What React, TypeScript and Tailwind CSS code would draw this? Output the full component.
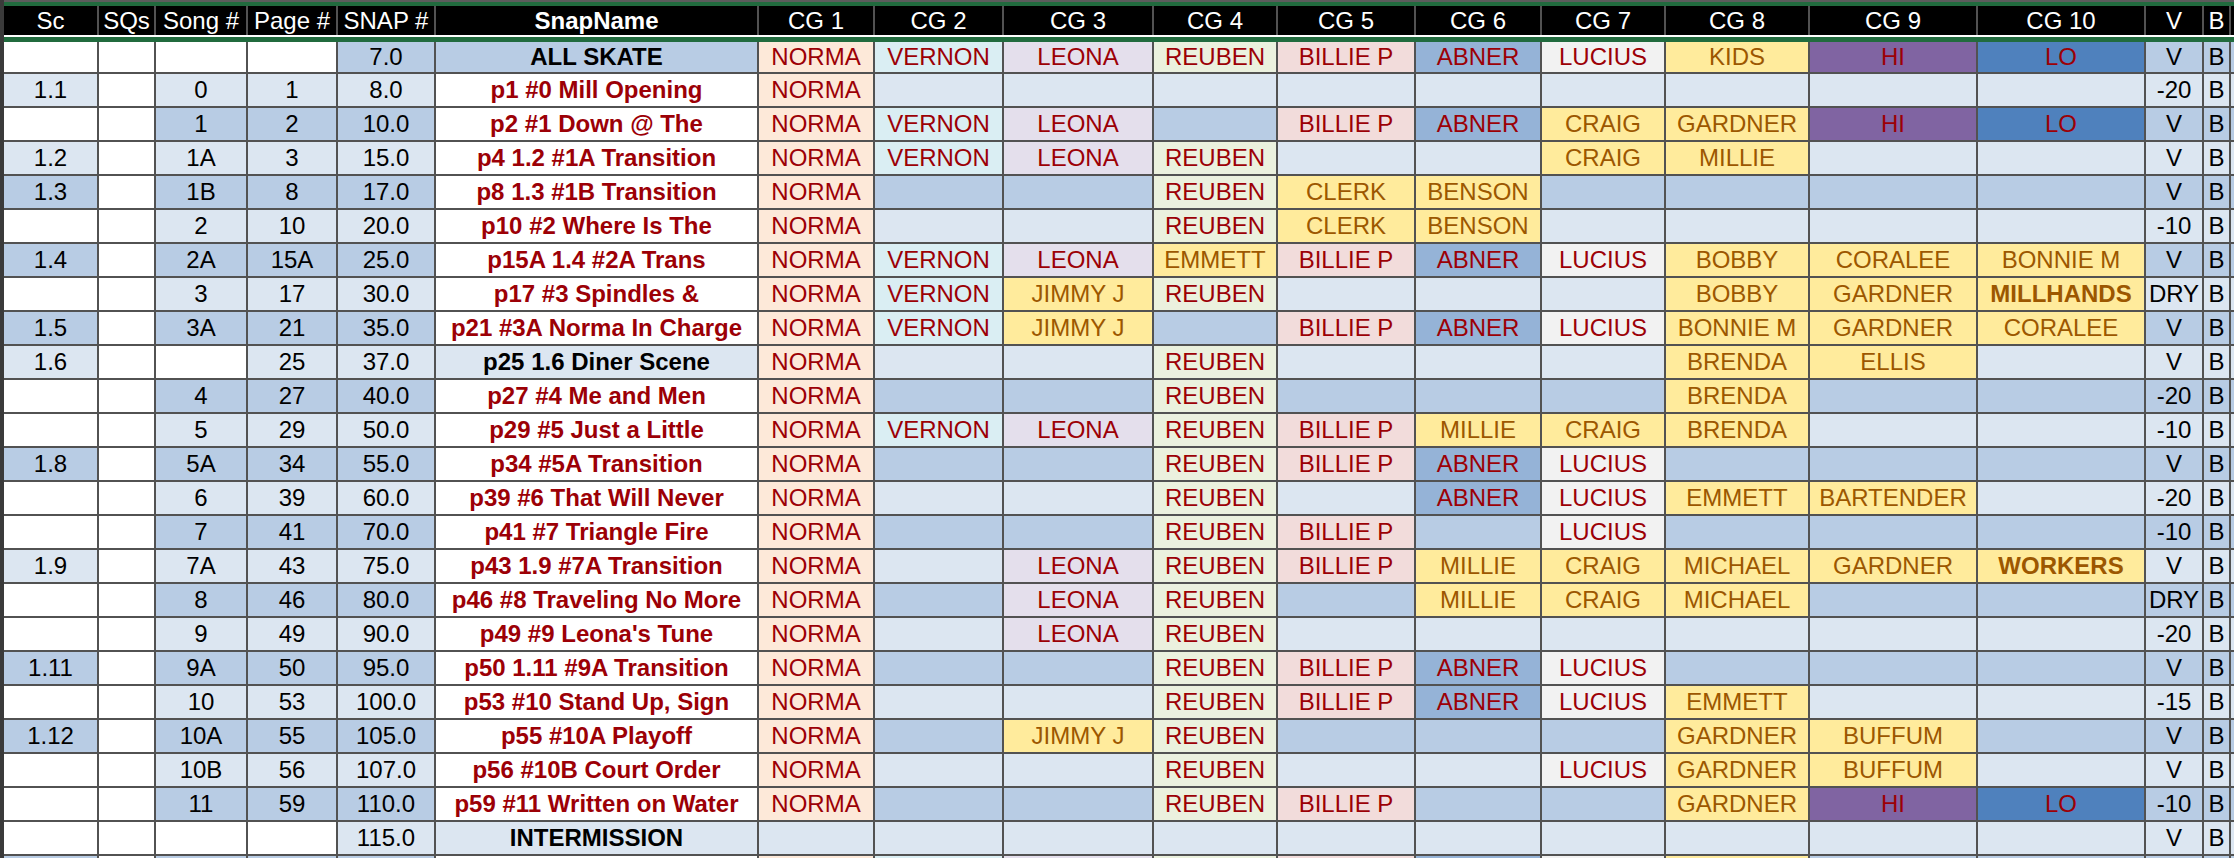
import React from 'react'

type Row = {
  sc: string
  song: string
  page: string
  snap: string
  name: string
  title?: boolean
  cg: string[]
  v: string
  hidden?: boolean
}

const COLS =
  'grid grid-cols-[93px_55px_90px_88px_96px_321px_114px_127px_148px_122px_136px_124px_122px_142px_166px_166px_56px_25px_1fr] gap-x-[2px]'

const HEADERS = [
  'Sc', 'SQs', 'Song #', 'Page #', 'SNAP #', 'SnapName',
  'CG 1', 'CG 2', 'CG 3', 'CG 4', 'CG 5', 'CG 6', 'CG 7', 'CG 8', 'CG 9', 'CG 10',
  'V', 'B', '',
]

// fill per character; anyone not listed gets the yellow "neutral" style
const CHAR_BG: Record<string, string> = {
  NORMA: 'bg-[#fde9d9] text-[#9c0006]',
  VERNON: 'bg-[#daeef3] text-[#9c0006]',
  LEONA: 'bg-[#e4dfec] text-[#9c0006]',
  REUBEN: 'bg-[#ebf1de] text-[#9c0006]',
  'BILLIE P': 'bg-[#f2dcdb] text-[#9c0006]',
  ABNER: 'bg-[#95b3d7] text-[#9c0006]',
  LUCIUS: 'bg-[#f2f2f2] text-[#9c0006]',
  HI: 'bg-[#8064a2] text-[#9c0006]',
  LO: 'bg-[#4f81bd] text-[#9c0006]',
}

const _ = ''

const rows: Row[] = [
  { sc: _, song: _, page: _, snap: '7.0', name: 'ALL SKATE', title: true, cg: ['NORMA', 'VERNON', 'LEONA', 'REUBEN', 'BILLIE P', 'ABNER', 'LUCIUS', 'KIDS', 'HI', 'LO'], v: 'V' },
  { sc: '1.1', song: '0', page: '1', snap: '8.0', name: 'p1 #0 Mill Opening', cg: ['NORMA', _, _, _, _, _, _, _, _, _], v: '-20' },
  { sc: _, song: '1', page: '2', snap: '10.0', name: 'p2 #1 Down @ The', cg: ['NORMA', 'VERNON', 'LEONA', _, 'BILLIE P', 'ABNER', 'CRAIG', 'GARDNER', 'HI', 'LO'], v: 'V' },
  { sc: '1.2', song: '1A', page: '3', snap: '15.0', name: 'p4 1.2 #1A Transition', cg: ['NORMA', 'VERNON', 'LEONA', 'REUBEN', _, _, 'CRAIG', 'MILLIE', _, _], v: 'V' },
  { sc: '1.3', song: '1B', page: '8', snap: '17.0', name: 'p8 1.3 #1B Transition', cg: ['NORMA', _, _, 'REUBEN', 'CLERK', 'BENSON', _, _, _, _], v: 'V' },
  { sc: _, song: '2', page: '10', snap: '20.0', name: 'p10 #2 Where Is The', cg: ['NORMA', _, _, 'REUBEN', 'CLERK', 'BENSON', _, _, _, _], v: '-10' },
  { sc: '1.4', song: '2A', page: '15A', snap: '25.0', name: 'p15A 1.4 #2A Trans', cg: ['NORMA', 'VERNON', 'LEONA', 'EMMETT', 'BILLIE P', 'ABNER', 'LUCIUS', 'BOBBY', 'CORALEE', 'BONNIE M'], v: 'V' },
  { sc: _, song: '3', page: '17', snap: '30.0', name: 'p17 #3 Spindles &', cg: ['NORMA', 'VERNON', 'JIMMY J', 'REUBEN', _, _, _, 'BOBBY', 'GARDNER', 'MILLHANDS'], v: 'DRY' },
  { sc: '1.5', song: '3A', page: '21', snap: '35.0', name: 'p21 #3A Norma In Charge', cg: ['NORMA', 'VERNON', 'JIMMY J', _, 'BILLIE P', 'ABNER', 'LUCIUS', 'BONNIE M', 'GARDNER', 'CORALEE'], v: 'V' },
  { sc: '1.6', song: _, page: '25', snap: '37.0', name: 'p25 1.6 Diner Scene', title: true, cg: ['NORMA', _, _, 'REUBEN', _, _, _, 'BRENDA', 'ELLIS', _], v: 'V' },
  { sc: _, song: '4', page: '27', snap: '40.0', name: 'p27 #4 Me and Men', cg: ['NORMA', _, _, 'REUBEN', _, _, _, 'BRENDA', _, _], v: '-20' },
  { sc: _, song: '5', page: '29', snap: '50.0', name: 'p29 #5 Just a Little', cg: ['NORMA', 'VERNON', 'LEONA', 'REUBEN', 'BILLIE P', 'MILLIE', 'CRAIG', 'BRENDA', _, _], v: '-10' },
  { sc: '1.8', song: '5A', page: '34', snap: '55.0', name: 'p34 #5A Transition', cg: ['NORMA', _, _, 'REUBEN', 'BILLIE P', 'ABNER', 'LUCIUS', _, _, _], v: 'V' },
  { sc: _, song: '6', page: '39', snap: '60.0', name: 'p39 #6 That Will Never', cg: ['NORMA', _, _, 'REUBEN', _, 'ABNER', 'LUCIUS', 'EMMETT', 'BARTENDER', _], v: '-20' },
  { sc: _, song: '7', page: '41', snap: '70.0', name: 'p41 #7 Triangle Fire', cg: ['NORMA', _, _, 'REUBEN', 'BILLIE P', _, 'LUCIUS', _, _, _], v: '-10' },
  { sc: '1.9', song: '7A', page: '43', snap: '75.0', name: 'p43 1.9 #7A Transition', cg: ['NORMA', _, 'LEONA', 'REUBEN', 'BILLIE P', 'MILLIE', 'CRAIG', 'MICHAEL', 'GARDNER', 'WORKERS'], v: 'V' },
  { sc: _, song: '8', page: '46', snap: '80.0', name: 'p46 #8 Traveling No More', cg: ['NORMA', _, 'LEONA', 'REUBEN', _, 'MILLIE', 'CRAIG', 'MICHAEL', _, _], v: 'DRY' },
  { sc: _, song: '9', page: '49', snap: '90.0', name: "p49 #9 Leona's Tune", cg: ['NORMA', _, 'LEONA', 'REUBEN', _, _, _, _, _, _], v: '-20' },
  { sc: '1.11', song: '9A', page: '50', snap: '95.0', name: 'p50 1.11 #9A Transition', cg: ['NORMA', _, _, 'REUBEN', 'BILLIE P', 'ABNER', 'LUCIUS', _, _, _], v: 'V' },
  { sc: _, song: '10', page: '53', snap: '100.0', name: 'p53 #10 Stand Up, Sign', cg: ['NORMA', _, _, 'REUBEN', 'BILLIE P', 'ABNER', 'LUCIUS', 'EMMETT', _, _], v: '-15' },
  { sc: '1.12', song: '10A', page: '55', snap: '105.0', name: 'p55 #10A Playoff', cg: ['NORMA', _, 'JIMMY J', 'REUBEN', _, _, _, 'GARDNER', 'BUFFUM', _], v: 'V' },
  { sc: _, song: '10B', page: '56', snap: '107.0', name: 'p56 #10B Court Order', cg: ['NORMA', _, _, 'REUBEN', _, _, 'LUCIUS', 'GARDNER', 'BUFFUM', _], v: 'V' },
  { sc: _, song: '11', page: '59', snap: '110.0', name: 'p59 #11 Written on Water', cg: ['NORMA', _, _, 'REUBEN', 'BILLIE P', _, _, 'GARDNER', 'HI', 'LO'], v: '-10' },
  { sc: _, song: _, page: _, snap: '115.0', name: 'INTERMISSION', title: true, cg: [_, _, _, _, _, _, _, _, _, _], v: 'V' },
  // next row only peeks in at the bottom edge: fills without text
  { sc: 'x', song: 'x', page: 'x', snap: 'x', name: 'x', cg: ['NORMA', 'VERNON', 'LEONA', 'REUBEN', 'BILLIE P', 'ABNER', 'LUCIUS', 'KIDS', _, _], v: 'x', hidden: true },
]

const Cell = ({ cls, children }: { cls: string; children?: React.ReactNode }) => (
  <div className={`flex items-center justify-center overflow-hidden whitespace-nowrap ${cls}`}>{children}</div>
)

const CgCell = ({ name, band, hidden }: { name: string; band: string; hidden?: boolean }) => {
  if (!name) return <Cell cls={band} />
  const label = hidden ? null : name
  if (CHAR_BG[name]) return <Cell cls={CHAR_BG[name]}>{label}</Cell>
  const bold = name === 'MILLHANDS' || name === 'WORKERS'
  return <Cell cls={`bg-[#ffeb9c] text-[#9c5700] ${bold ? 'font-bold' : ''}`}>{label}</Cell>
}

const SheetRow = ({ row, idx }: { row: Row; idx: number }) => {
  const band = idx % 2 === 0 ? 'bg-[#b8cce4]' : 'bg-[#dce6f1]'
  const filled = (v: string) => (v ? band : 'bg-white')
  const t = (v: string) => (row.hidden ? null : v)
  return (
    <div className={`${COLS} ${idx === 0 ? 'h-[30px]' : 'h-[32px]'} shrink-0 text-black`}>
      <Cell cls={filled(row.sc)}>{t(row.sc)}</Cell>
      <Cell cls="bg-white" />
      <Cell cls={filled(row.song)}>{t(row.song)}</Cell>
      <Cell cls={filled(row.page)}>{t(row.page)}</Cell>
      <Cell cls={band}>{t(row.snap)}</Cell>
      {row.title ? (
        <Cell cls={`${band} font-bold text-black`}>{t(row.name)}</Cell>
      ) : (
        <Cell cls="bg-white font-bold text-[#9c0006]">{t(row.name)}</Cell>
      )}
      {row.cg.map((c, i) => (
        <CgCell key={i} name={c} band={band} hidden={row.hidden} />
      ))}
      <Cell cls={band}>{t(row.v)}</Cell>
      <Cell cls={band}>{t('B')}</Cell>
      <Cell cls={band} />
    </div>
  )
}

export default function App() {
  return (
    <div
      className="h-[858px] w-[2234px] overflow-hidden border-l-[4px] border-[#3a3a3a] bg-[#525252] text-[24px] leading-none"
      style={{ fontFamily: '"Liberation Sans", Arial, sans-serif' }}
    >
      <div className="h-[2px] bg-[#5c5c5c]" />
      <div className="h-[4px] bg-[#216b3e]" />

      {/* header */}
      <div className={`${COLS} h-[29px]`}>
        {HEADERS.map((h, i) => (
          <Cell key={i} cls={`bg-black text-white ${h === 'SnapName' ? 'font-bold' : ''}`}>
            {h}
          </Cell>
        ))}
      </div>
      <div className="h-[2px] bg-white" />
      <div className="h-[5px] bg-[#216b3e]" />

      {/* body */}
      <div className="flex flex-col gap-y-[2px]">
        {rows.map((r, i) => (
          <SheetRow key={i} row={r} idx={i} />
        ))}
      </div>
    </div>
  )
}
